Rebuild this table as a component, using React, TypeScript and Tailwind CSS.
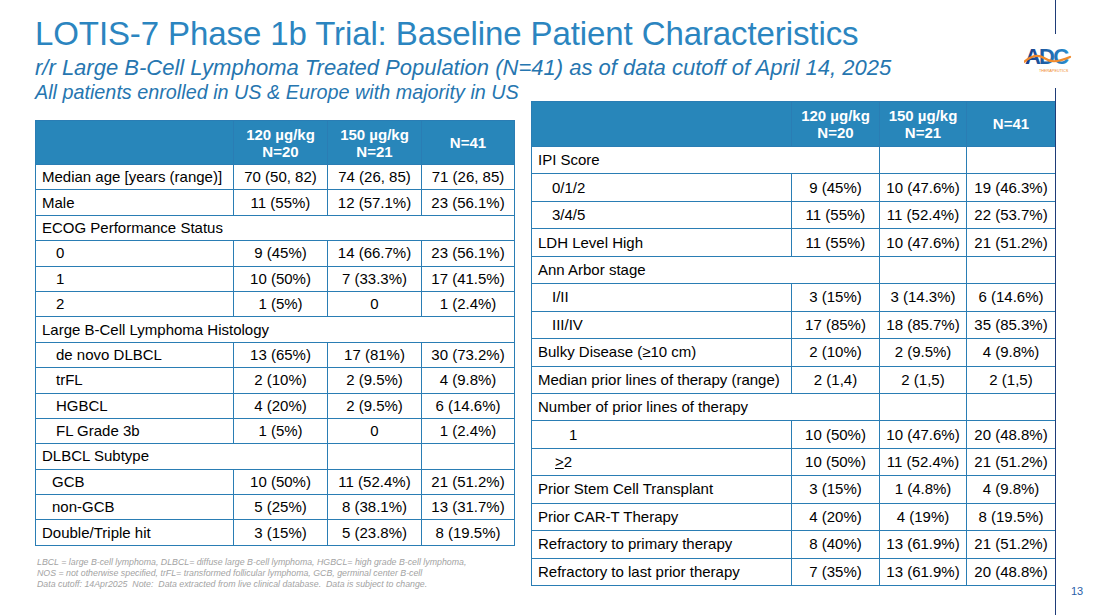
import React from "react";

type Row = {
  label: React.ReactNode;
  vals?: [string, string, string];
  indent?: string;
  span?: number;
};

const leftRows: Row[] = [
  { label: "Median age [years (range)]", vals: ["70 (50, 82)", "74 (26, 85)", "71 (26, 85)"] },
  { label: "Male", vals: ["11 (55%)", "12 (57.1%)", "23 (56.1%)"] },
  { label: "ECOG Performance Status", span: 4 },
  { label: "0", vals: ["9 (45%)", "14 (66.7%)", "23 (56.1%)"], indent: "pl-[20px]" },
  { label: "1", vals: ["10 (50%)", "7 (33.3%)", "17 (41.5%)"], indent: "pl-[20px]" },
  { label: "2", vals: ["1 (5%)", "0", "1 (2.4%)"], indent: "pl-[20px]" },
  { label: "Large B-Cell Lymphoma Histology", span: 4 },
  { label: "de novo DLBCL", vals: ["13 (65%)", "17 (81%)", "30 (73.2%)"], indent: "pl-[20px]" },
  { label: "trFL", vals: ["2 (10%)", "2 (9.5%)", "4 (9.8%)"], indent: "pl-[20px]" },
  { label: "HGBCL", vals: ["4 (20%)", "2 (9.5%)", "6 (14.6%)"], indent: "pl-[20px]" },
  { label: "FL Grade 3b", vals: ["1 (5%)", "0", "1 (2.4%)"], indent: "pl-[20px]" },
  { label: "DLBCL Subtype", span: 2 },
  { label: "GCB", vals: ["10 (50%)", "11 (52.4%)", "21 (51.2%)"], indent: "pl-[16px]" },
  { label: "non-GCB", vals: ["5 (25%)", "8 (38.1%)", "13 (31.7%)"], indent: "pl-[16px]" },
  { label: "Double/Triple hit", vals: ["3 (15%)", "5 (23.8%)", "8 (19.5%)"] },
];

const rightRows: Row[] = [
  { label: "IPI Score", span: 2 },
  { label: "0/1/2", vals: ["9 (45%)", "10 (47.6%)", "19 (46.3%)"], indent: "pl-[20px]" },
  { label: "3/4/5", vals: ["11 (55%)", "11 (52.4%)", "22 (53.7%)"], indent: "pl-[20px]" },
  { label: "LDH Level High", vals: ["11 (55%)", "10 (47.6%)", "21 (51.2%)"] },
  { label: "Ann Arbor stage", span: 2 },
  { label: "I/II", vals: ["3 (15%)", "3 (14.3%)", "6 (14.6%)"], indent: "pl-[20px]" },
  { label: "III/IV", vals: ["17 (85%)", "18 (85.7%)", "35 (85.3%)"], indent: "pl-[20px]" },
  { label: "Bulky Disease (≥10 cm)", vals: ["2 (10%)", "2 (9.5%)", "4 (9.8%)"] },
  { label: "Median prior lines of therapy (range)", vals: ["2 (1,4)", "2 (1,5)", "2 (1,5)"] },
  { label: "Number of prior lines of therapy", span: 2 },
  { label: "1", vals: ["10 (50%)", "10 (47.6%)", "20 (48.8%)"], indent: "pl-[37px]" },
  {
    label: (
      <span>
        <span className="underline">&gt;</span>2
      </span>
    ),
    vals: ["10 (50%)", "11 (52.4%)", "21 (51.2%)"],
    indent: "pl-[23px]",
  },
  { label: "Prior Stem Cell Transplant", vals: ["3 (15%)", "1 (4.8%)", "4 (9.8%)"] },
  { label: "Prior CAR-T Therapy", vals: ["4 (20%)", "4 (19%)", "8 (19.5%)"] },
  { label: "Refractory to primary therapy", vals: ["8 (40%)", "13 (61.9%)", "21 (51.2%)"] },
  { label: "Refractory to last prior therapy", vals: ["7 (35%)", "13 (61.9%)", "20 (48.8%)"] },
];

const cell = "border border-[#2a7db4]";

function DataTable({
  rows,
  cols,
  headH,
  rowH,
  width,
}: {
  rows: Row[];
  cols: string[];
  headH: string;
  rowH: string;
  width: string;
}) {
  return (
    <table className={`${width} table-fixed border-collapse text-[15px] leading-[18px] text-black`}>
      <colgroup>
        {cols.map((c, i) => (
          <col key={i} className={c} />
        ))}
      </colgroup>
      <thead>
        <tr className={headH}>
          <th className={`${cell} bg-[#2886ba]`}></th>
          <th className={`${cell} bg-[#2886ba] font-bold text-white leading-[17px]`}>
            120 µg/kg
            <br />
            N=20
          </th>
          <th className={`${cell} bg-[#2886ba] font-bold text-white leading-[17px]`}>
            150 µg/kg
            <br />
            N=21
          </th>
          <th className={`${cell} bg-[#2886ba] font-bold text-white`}>N=41</th>
        </tr>
      </thead>
      <tbody>
        {rows.map((r, i) => (
          <tr key={i} className={rowH}>
            <td
              colSpan={r.span ?? 1}
              className={`${cell} whitespace-nowrap text-left ${r.indent ?? "pl-[6px]"}`}
            >
              {r.label}
            </td>
            {r.vals
              ? r.vals.map((v, j) => (
                  <td key={j} className={`${cell} whitespace-nowrap text-center`}>
                    {v}
                  </td>
                ))
              : r.span === 2 && (
                  <>
                    <td className={cell}></td>
                    <td className={cell}></td>
                  </>
                )}
          </tr>
        ))}
      </tbody>
    </table>
  );
}

function Logo() {
  return (
    <svg width="56" height="30" viewBox="0 0 56 30">
      <defs>
        <linearGradient id="adcBlue" x1="0" x2="1" y1="0" y2="0">
          <stop offset="0" stopColor="#173a85" />
          <stop offset="1" stopColor="#2a8fd0" />
        </linearGradient>
      </defs>
      <text
        x="1"
        y="19"
        fontFamily="Liberation Sans, sans-serif"
        fontWeight="700"
        fontSize="22"
        letterSpacing="-1.8"
        fill="url(#adcBlue)"
      >
        ADC
      </text>
      <path
        d="M0 17 C 8 10, 14 9, 20 13 S 32 18, 46 12"
        fill="none"
        stroke="#f08a2c"
        strokeWidth="2.2"
        strokeLinecap="round"
      />
      <text
        x="15"
        y="27"
        fontFamily="Liberation Sans, sans-serif"
        fontSize="3.8"
        fill="#f08a2c"
      >
        THERAPEUTICS
      </text>
    </svg>
  );
}

export default function App() {
  return (
    <div className="relative h-[615px] w-[1097px] overflow-hidden bg-white font-['Liberation_Sans',Arial,sans-serif]">
      {/* right edge rule + logo */}
      <div className="absolute left-[1055px] top-0 h-[34px] w-px bg-[#1f3c78]" />
      <div className="absolute left-[1055px] top-[88px] h-[527px] w-px bg-[#1f3c78]" />
      <div className="absolute left-[1024px] top-[45px]">
        <Logo />
      </div>
      <div className="absolute left-[1071px] top-[583px] text-[11px] text-[#2b5fa8]">13</div>

      <div className="pl-[35px] pt-[13px]">
        <h1 className="text-[33px] leading-[42px] font-normal text-[#2b85c0] tracking-[-0.1px] whitespace-nowrap">
          LOTIS-7 Phase 1b Trial: Baseline Patient Characteristics
        </h1>
        <p className="mt-[0px] text-[22px] leading-[26px] italic text-[#2676b0] whitespace-nowrap">
          r/r Large B-Cell Lymphoma Treated Population (N=41) as of data cutoff of April 14, 2025
        </p>
      </div>

      <div className="flex items-start pl-[35px]">
        <div className="flex w-[479px] flex-col">
          <p className="text-[19.8px] leading-[22px] italic text-[#2676b0] whitespace-nowrap">
            All patients enrolled in US &amp; Europe with majority in US
          </p>
          <div className="mt-[17px]">
            <DataTable
              rows={leftRows}
              cols={["w-[198px]", "w-[94px]", "w-[94px]", "w-[93px]"]}
              headH="h-[44px]"
              rowH="h-[25.4px]"
              width="w-[479px]"
            />
          </div>
          <div className="mt-[11px] pl-[2px] text-[8.8px] leading-[11px] italic text-[#a3a3a3] whitespace-nowrap">
            <p>LBCL = large B-cell lymphoma, DLBCL= diffuse large B-cell lymphoma, HGBCL= high grade B-cell lymphoma,</p>
            <p>NOS = not otherwise specified, trFL= transformed follicular lymphoma, GCB, germinal center B-cell</p>
            <p>Data cutoff: 14Apr2025&nbsp; Note:&nbsp; Data extracted from live clinical database.&nbsp; Data is subject to change.</p>
          </div>
        </div>
        <div className="ml-[17px] mt-[20px]">
          <DataTable
            rows={rightRows}
            cols={["w-[260px]", "w-[88px]", "w-[87px]", "w-[89px]"]}
            headH="h-[45px]"
            rowH="h-[27.45px]"
            width="w-[524px]"
          />
        </div>
      </div>
    </div>
  );
}
